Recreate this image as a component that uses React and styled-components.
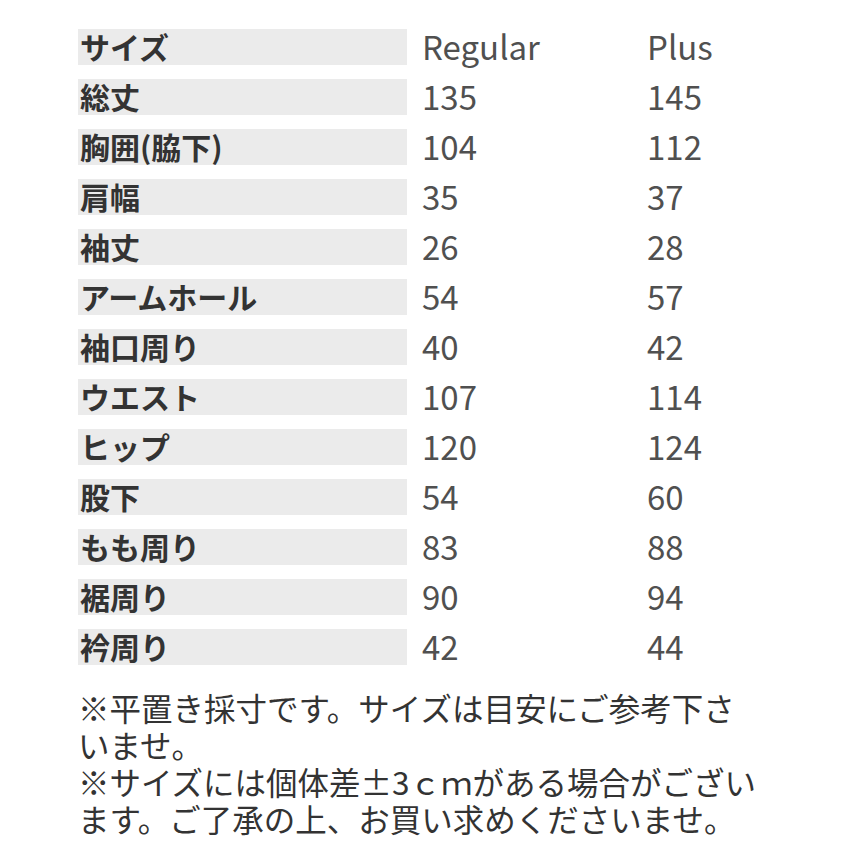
import React from "react";
import styled, { createGlobalStyle } from "styled-components";

const Global = createGlobalStyle`
  html, body { margin: 0; padding: 0; background: #ffffff; }
  body { font-family: "Noto Sans CJK JP", "Noto Sans", sans-serif; }
`;

const Page = styled.div`
  width: 845px;
  height: 845px;
  box-sizing: border-box;
  padding: 29px 0 0 78px;
  overflow: hidden;
`;

const Table = styled.div`
  display: grid;
  grid-template-columns: 329px 225px 1fr;
  grid-auto-rows: 36px;
  row-gap: 14px;
`;

const Label = styled.div`
  background: #ebebeb;
  display: flex;
  align-items: center;
  padding-left: 2px;
  padding-bottom: 2px;
  box-sizing: border-box;
  font-size: 30px;
  font-weight: 700;
  color: #333333;
  white-space: nowrap;
`;

const Value = styled.div`
  display: flex;
  align-items: center;
  padding-left: 15px;
  padding-bottom: 2px;
  box-sizing: border-box;
  font-size: 33px;
  font-weight: 400;
  color: #505050;
  white-space: nowrap;
`;

const Notes = styled.div`
  margin-top: 24px;
  width: 684px;
  font-size: 31.5px;
  line-height: 37px;
  color: #333333;
`;

const Note = styled.p`
  margin: 0;
`;

const rows = [
  ["サイズ", "Regular", "Plus"],
  ["総丈", "135", "145"],
  ["胸囲(脇下)", "104", "112"],
  ["肩幅", "35", "37"],
  ["袖丈", "26", "28"],
  ["アームホール", "54", "57"],
  ["袖口周り", "40", "42"],
  ["ウエスト", "107", "114"],
  ["ヒップ", "120", "124"],
  ["股下", "54", "60"],
  ["もも周り", "83", "88"],
  ["裾周り", "90", "94"],
  ["衿周り", "42", "44"],
];

export default function App() {
  return (
    <>
      <Global />
      <Page>
        <Table>
          {rows.map(([l, a, b]) => (
            <React.Fragment key={l}>
              <Label>{l}</Label>
              <Value>{a}</Value>
              <Value>{b}</Value>
            </React.Fragment>
          ))}
        </Table>
        <Notes>
          <Note>※平置き採寸です。サイズは目安にご参考下さいませ。</Note>
          <Note>※サイズには個体差±3ｃｍがある場合がございます。ご了承の上、お買い求めくださいませ。</Note>
        </Notes>
      </Page>
    </>
  );
}
